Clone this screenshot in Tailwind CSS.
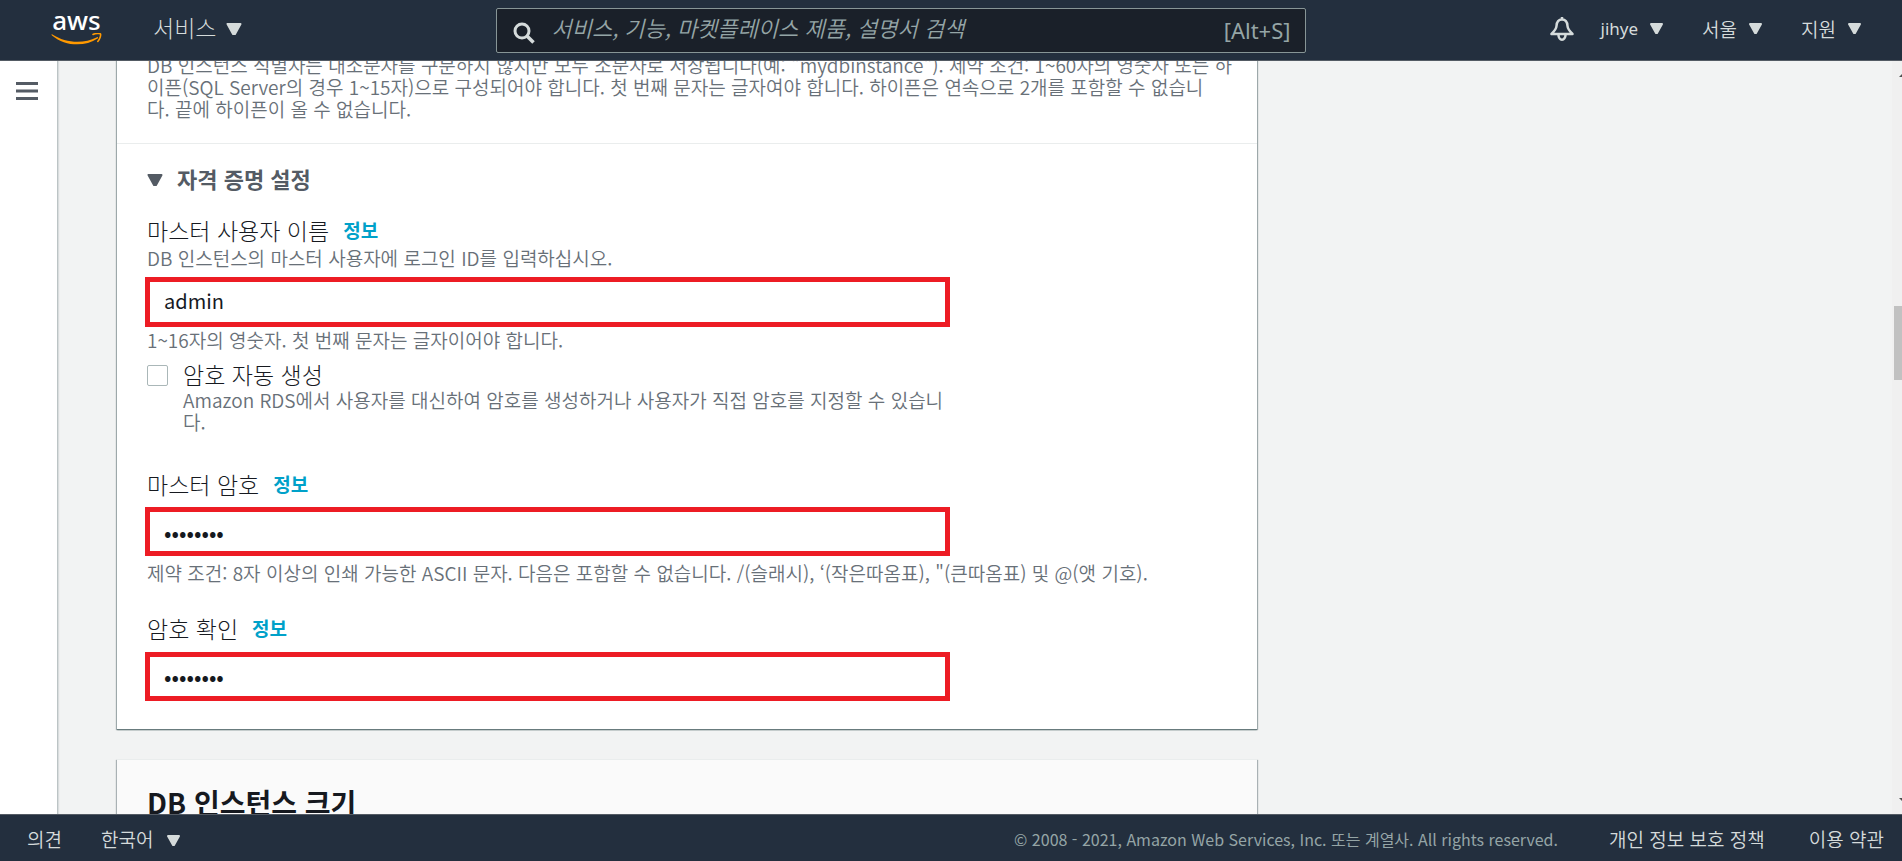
<!DOCTYPE html>
<html lang="ko">
<head>
<meta charset="utf-8">
<title>RDS - AWS Console</title>
<script src="https://cdn.jsdelivr.net/npm/@tailwindcss/browser@4"></script>
</head>
<body class="flex h-screen flex-col overflow-hidden bg-[#f2f3f3] font-['Noto_Sans_CJK_KR',sans-serif] text-[19px] leading-[22px] font-[350] text-[#687078]">

<header class="flex h-[61px] shrink-0 items-center border-b border-[#545b64] bg-[#232f3e] pr-[41px] pl-[51px] text-[#d5dbdb]">
  <a href="#" aria-label="AWS" class="flex w-[51px] shrink-0 flex-col items-center pb-1.5">
    <span class="h-[23px] font-['Noto_Sans',sans-serif] text-[26px] leading-[20px] font-medium text-white">aws</span>
    <svg class="h-3 w-[51px]" viewBox="0 0 51 12" fill="none">
      <path d="M1 1.2C15 10.200 32 11.200 46 4.200C47 3.800 47.500 4.700 46.600 5.400C34 14 14 13.500 1 2.400C.3 1.700.5.900 1 1.200Z" fill="#f90"/>
      <path d="M42 1.500C44.500.3 49 .2 49.500 1C50 2 49 6 46.800 8.500" stroke="#f90" stroke-width="1.600" stroke-linecap="round"/>
    </svg>
  </a>
  <button class="ml-[51px] flex shrink-0 items-center gap-2.5 pb-1.5 text-[23px] leading-[30px] font-light">서비스
    <svg class="mt-1 h-3 w-4" viewBox="0 0 16 12" fill="currentColor" stroke="currentColor" stroke-width="2" stroke-linejoin="round"><path d="M1.500 1h13L9 11H7z"/></svg>
  </button>
  <label class="ml-[254px] flex h-[45px] w-[810px] items-center rounded-[2px] border border-[#879596] bg-[#1a2029] pr-[15px] pl-4">
    <svg class="mt-1.5 h-[22px] w-[22px] shrink-0" viewBox="0 0 22 22" fill="none" stroke="#d5dbdb" stroke-width="3"><circle cx="9" cy="9" r="7"/><path d="M14 14l6.500 6.500" stroke-width="3.500"/></svg>
    <input type="search" aria-label="검색" placeholder="서비스, 기능, 마켓플레이스 제품, 설명서 검색" class="ml-4 min-w-0 flex-1 pb-1.5 text-[22px] leading-[30px] font-[350] italic outline-none placeholder:text-[#95a5a6]">
    <span class="font-['Noto_Sans',sans-serif] text-[22px] font-normal text-[#95a5a6]">[Alt+S]</span>
  </label>
  <nav class="ml-auto flex shrink-0 items-center pb-0.5">
    <button aria-label="알림" class="mr-[27px]">
      <svg class="block h-[25px] w-6" viewBox="0 0 24 25" fill="none" stroke="#d5dbdb" stroke-width="2.500" stroke-linejoin="round"><path d="M12 0v3" /><path d="M12 2.500C8 2.500 6.700 5.500 6.500 9C6.300 12 4 14.500 1.500 17h21C20 14.500 17.700 12 17.500 9C17.300 5.500 16 2.500 12 2.500Z"/><path d="M8.500 18a3.500 4.700 0 0 0 7 0"/></svg>
    </button>
    <button class="flex items-center gap-3 font-['Noto_Sans',sans-serif] text-[17px] font-normal">jihye
      <svg class="h-3 w-[13px]" viewBox="0 0 13 12" fill="currentColor" stroke="currentColor" stroke-width="2" stroke-linejoin="round"><path d="M1 1h11L7 10H6z"/></svg>
    </button>
    <button class="ml-[39px] flex items-center gap-3">서울
      <svg class="h-3 w-[13px]" viewBox="0 0 13 12" fill="currentColor" stroke="currentColor" stroke-width="2" stroke-linejoin="round"><path d="M1 1h11L7 10H6z"/></svg>
    </button>
    <button class="ml-[39px] flex items-center gap-3">지원
      <svg class="h-3 w-[13px]" viewBox="0 0 13 12" fill="currentColor" stroke="currentColor" stroke-width="2" stroke-linejoin="round"><path d="M1 1h11L7 10H6z"/></svg>
    </button>
  </nav>
</header>

<div class="flex min-h-0 flex-1 overflow-hidden">
  <aside class="w-[58px] shrink-0 border-r border-[#bcc4c5] bg-white pt-[21px] pl-4 shadow-[1px_0_1px_rgba(0,28,36,0.1)]">
    <button aria-label="메뉴 열기" class="block">
      <svg class="block h-[18px] w-[22px]" viewBox="0 0 22 18" fill="#545b64"><path d="M0 0h22v3H0zM0 7.500h22v3H0zM0 15h22v3H0z"/></svg>
    </button>
  </aside>

  <main class="min-w-0 flex-1 overflow-hidden pl-[59px] whitespace-nowrap">
    <section class="max-w-[1140px] bg-white pb-7 shadow-[0_1px_1px_#687b7d,1px_1px_1px_rgba(0,28,36,0.3),-1px_1px_1px_rgba(0,28,36,0.3)]">
      <p class="-mt-[7px] border-b border-[#eaeded] px-[30px] pb-[23px]">DB 인스턴스 식별자는 대소문자를 구분하지 않지만 모두 소문자로 저장됩니다(예: "mydbinstance"). 제약 조건: 1~60자의 영숫자 또는 하<br>이픈(SQL Server의 경우 1~15자)으로 구성되어야 합니다. 첫 번째 문자는 글자여야 합니다. 하이픈은 연속으로 2개를 포함할 수 없습니<br>다. 끝에 하이픈이 올 수 없습니다.</p>

      <div class="px-[30px]">
        <button class="mt-[19px] flex items-center gap-3.5 text-[22px] leading-[30px] font-bold text-[#545b64]">
          <svg class="mt-1 h-3 w-4" viewBox="0 0 16 12" fill="currentColor" stroke="currentColor" stroke-width="2" stroke-linejoin="round"><path d="M1.500 1h13L9 11H7z"/></svg>자격 증명 설정
        </button>

        <div class="mt-[22px] mb-0.5 flex items-center gap-3.5 text-[23px] leading-[30px] font-light text-[#16191f]">
          <label for="user">마스터 사용자 이름</label><a href="#" class="text-[19px] font-bold text-[#00a1c9]">정보</a>
        </div>
        <p>DB 인스턴스의 마스터 사용자에 로그인 ID를 입력하십시오.</p>
        <input id="user" type="text" value="admin" class="mt-2 -ml-0.5 block h-[50px] w-full max-w-[805px] border-5 border-[#ed1c24] bg-white px-3.5 pb-1 text-[20px] font-normal text-[#16191f] outline-none">
        <p class="mt-0.5">1~16자의 영숫자. 첫 번째 문자는 글자이어야 합니다.</p>

        <div class="mt-2 flex gap-[15px]">
          <input id="auto" type="checkbox" class="mt-1.5 h-[21px] w-[21px] appearance-none rounded-[2px] border border-[#aab7b8] bg-white">
          <label for="auto"><span class="block text-[23px] leading-[30px] font-light text-[#16191f]">암호 자동 생성</span>Amazon RDS에서 사용자를 대신하여 암호를 생성하거나 사용자가 직접 암호를 지정할 수 있습니<br>다.</label>
        </div>

        <div class="mt-[36px] flex items-center gap-3.5 text-[23px] leading-[30px] font-light text-[#16191f]">
          <label for="pw">마스터 암호</label><a href="#" class="text-[19px] font-bold text-[#00a1c9]">정보</a>
        </div>
        <input id="pw" type="password" value="password" class="mt-2 -ml-0.5 block h-[49px] w-full max-w-[805px] border-5 border-[#ed1c24] bg-white px-3.5 pb-0.5 text-[22px] font-normal text-[#16191f] outline-none">
        <p class="mt-[6px]">제약 조건: 8자 이상의 인쇄 가능한 ASCII 문자. 다음은 포함할 수 없습니다. /(슬래시), ‘(작은따옴표), "(큰따옴표) 및 @(앳 기호).</p>

        <div class="mt-[29px] flex items-center gap-3.5 text-[23px] leading-[30px] font-light text-[#16191f]">
          <label for="pw2">암호 확인</label><a href="#" class="text-[19px] font-bold text-[#00a1c9]">정보</a>
        </div>
        <input id="pw2" type="password" value="password" class="mt-[9px] -ml-0.5 block h-[49px] w-full max-w-[805px] border-5 border-[#ed1c24] bg-white px-3.5 pb-1 text-[22px] font-normal text-[#16191f] outline-none">
      </div>
    </section>

    <section class="mt-[30px] h-40 max-w-[1140px] border-t border-[#eaeded] bg-[#fafafa] px-[30px] pt-6 shadow-[1px_1px_1px_rgba(0,28,36,0.3),-1px_1px_1px_rgba(0,28,36,0.3)]">
      <h2 class="text-[28px] leading-[36px] font-bold text-[#16191f]">DB 인스턴스 크기</h2>
    </section>
  </main>

  <div class="flex w-2.5 shrink-0 flex-col items-end overflow-hidden bg-[#f0f0f0] pt-[13px] pb-[13px]" aria-hidden="true">
    <span class="h-[3px] w-[3px] bg-[#505050] [clip-path:polygon(100%_0,100%_100%,0_100%)]"></span>
    <span class="mt-[229px] h-[74px] w-2 bg-[#c1c1c1]"></span>
    <span class="mt-auto h-[3px] w-[3px] bg-[#505050] [clip-path:polygon(0_0,100%_0,100%_100%)]"></span>
  </div>
</div>

<footer class="flex h-[47px] shrink-0 items-center border-t border-[#545b64] bg-[#232f3e] pt-0.5 pr-[18px] pl-[27px] whitespace-nowrap text-[#d5dbdb]">
  <a href="#">의견</a>
  <button class="ml-[39px] flex items-center gap-3.5">한국어
    <svg class="mt-1 h-3 w-[13px]" viewBox="0 0 13 12" fill="currentColor" stroke="currentColor" stroke-width="2" stroke-linejoin="round"><path d="M1 1h11L7 10H6z"/></svg>
  </button>
  <span class="ml-auto text-[16px] font-normal text-[#95a5a6]">© 2008 - 2021, Amazon Web Services, Inc. 또는 계열사. All rights reserved.</span>
  <a href="#" class="ml-[51px]">개인 정보 보호 정책</a>
  <a href="#" class="ml-11">이용 약관</a>
</footer>
</body>
</html>
